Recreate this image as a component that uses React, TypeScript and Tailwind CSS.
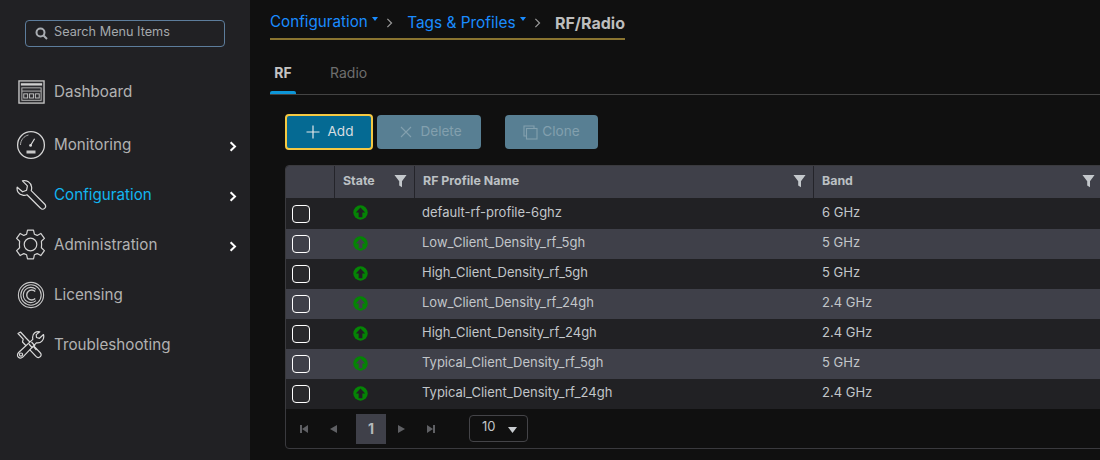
import React from "react";

const font = "font-['Inter','Liberation_Sans',sans-serif]";

const Filter = () => (
  <svg width="13" height="14" viewBox="0 0 14 14" className="shrink-0" preserveAspectRatio="none">
    <path d="M0.5 1H13.5L8.6 7.2V13.2L5.6 11.4V7.2Z" fill="#c4c8cc" />
  </svg>
);

const Up = ({ fill }: { fill: string }) => (
  <svg width="15" height="15" viewBox="0 0 16 16" className="mb-[2px]">
    <circle cx="8" cy="8" r="7.7" fill="#058405" />
    <path d="M8 2.6L13 8H10V13H6V8H3Z" fill={fill} />
  </svg>
);

const Chevron = () => (
  <svg width="8" height="11" viewBox="0 0 8 11" className="ml-auto mr-[13px] shrink-0 mt-[3px]">
    <path d="M1.6 1.2L6 5.5L1.6 9.8" fill="none" stroke="#fff" strokeWidth="2" />
  </svg>
);

const DashboardIcon = () => (
  <svg width="27" height="24" viewBox="0 0 28 26" preserveAspectRatio="none">
    <rect x="1" y="1" width="26" height="24" fill="#2c2c2f" stroke="#c8c8c8" strokeWidth="1.4" />
    <rect x="3" y="3.5" width="22" height="2.5" fill="#d0d0d0" />
    <rect x="4" y="8.5" width="20" height="13.5" fill="none" stroke="#b8b8b8" />
    <path d="M4 12H24" stroke="#b8b8b8" />
    <rect x="6" y="15" width="4" height="4.5" fill="none" stroke="#c4c4c4" />
    <rect x="12" y="15" width="4" height="4.5" fill="none" stroke="#c4c4c4" />
    <rect x="18" y="15" width="4" height="4.5" fill="none" stroke="#c4c4c4" />
  </svg>
);

const MonitoringIcon = () => (
  <svg width="30" height="30" viewBox="0 0 30 30" fill="none">
    <circle cx="15" cy="15" r="13.4" stroke="#d4d4d4" strokeWidth="1.3" />
    <path d="M4.5 15C4.5 10 8 6 12.5 5" stroke="#a8a8a8" />
    <path d="M14.8 15L18.6 8.8" stroke="#d8d8d8" strokeWidth="1.2" />
    <circle cx="14.6" cy="15.4" r="1.4" fill="#d8d8d8" />
    <rect x="10.5" y="20.5" width="9" height="3" fill="#c8c8c8" />
  </svg>
);

const WrenchIcon = () => (
  <svg width="32" height="32" viewBox="0 0 32 32" fill="none">
    <path
      d="M2.2 8.2L7.6 12.8L11.6 11.2L12.4 6.8L7.4 1.8C11.6 0.8 16 3.4 16.6 8C16.8 9.4 16.6 10.6 16.2 11.6L29.6 25C31 26.4 31 27.8 29.8 29.2C28.4 30.6 26.8 30.6 25.6 29.2L12 15.8C10.6 16.4 9.2 16.6 7.8 16.2C3.8 15.4 1.4 12.2 2.2 8.2Z"
      stroke="#dadada"
      strokeWidth="1.2"
      strokeLinejoin="round"
    />
  </svg>
);

const GearIcon = () => (
  <svg width="32" height="32" viewBox="0 0 32 32" fill="none" stroke="#d4d4d4" strokeWidth="1.2">
    <circle cx="15.5" cy="15.5" r="6.3" />
    <path
      d="M12.5 1.2H18.5L19.4 5.2L22.2 6.4L25.8 4.4L29.4 9.4L26.4 12.2L26.6 15.5L26.4 18.8L29.4 21.6L25.8 26.6L22.2 24.6L19.4 25.8L18.5 29.8H12.5L11.6 25.8L8.8 24.6L5.2 26.6L1.6 21.6L4.6 18.8L4.4 15.5L4.6 12.2L1.6 9.4L5.2 4.4L8.8 6.4L11.6 5.2Z"
      strokeLinejoin="round"
    />
  </svg>
);

const LicenseIcon = () => (
  <svg width="28" height="28" viewBox="0 0 28 28" fill="none" stroke="#c8c8c8" strokeWidth="1.1">
    <circle cx="14" cy="14" r="12.6" />
    <circle cx="14" cy="14" r="10.2" />
    <path d="M19 8.4A7.6 7.6 0 1 0 19 19.6" />
    <path d="M18.2 10.4A5 5 0 1 0 18.2 17.6" strokeWidth="1.4" />
  </svg>
);

const ToolsIcon = () => (
  <svg width="30" height="28" viewBox="0 0 30 28" fill="none" stroke="#d8d8d8" strokeWidth="1.2" strokeLinejoin="round">
    <path d="M2 2.5L4.5 1L10 7L24 21.5C25.5 23 25.5 24.5 24.2 25.7C23 27 21.4 26.8 20 25.4L6.5 11L7.2 8.2Z" />
    <path d="M27.5 3.5L23.5 7.3L20.5 6.5L20.2 3.6L23.8 0.8C20 0 16.6 2.4 16.6 6.2L16.8 8.4L2.6 21.5C1 23.2 1.2 25.2 2.4 26.2C3.8 27.4 5.6 27.2 7 25.8L20.4 11.8C25 12.6 28.8 8.6 27.5 3.5Z" fill="#212124" />
    <circle cx="5" cy="23.6" r="1.6" />
    <path d="M13 13L16.5 17M15.5 11L19 15M17.5 15.5L20.5 19" />
  </svg>
);

const items = [
  { label: "Dashboard", icon: <DashboardIcon /> },
  { label: "Monitoring", icon: <MonitoringIcon />, arrow: true },
  { label: "Configuration", icon: <WrenchIcon />, arrow: true, active: true },
  { label: "Administration", icon: <GearIcon />, arrow: true },
  { label: "Licensing", icon: <LicenseIcon /> },
  { label: "Troubleshooting", icon: <ToolsIcon /> },
];

const rows = [
  ["default-rf-profile-6ghz", "6 GHz"],
  ["Low_Client_Density_rf_5gh", "5 GHz"],
  ["High_Client_Density_rf_5gh", "5 GHz"],
  ["Low_Client_Density_rf_24gh", "2.4 GHz"],
  ["High_Client_Density_rf_24gh", "2.4 GHz"],
  ["Typical_Client_Density_rf_5gh", "5 GHz"],
  ["Typical_Client_Density_rf_24gh", "2.4 GHz"],
];

const Caret = () => (
  <span className="inline-block w-0 h-0 ml-[4px] mb-[8px] border-x-[3.5px] border-x-transparent border-t-[4px] border-t-[#1a8cff]" />
);

const Sep = () => (
  <svg width="8" height="12" viewBox="0 0 8 12" className="ml-[8px] mr-[14px] mt-[1px]">
    <path d="M1.5 1.5L6 6L1.5 10.5" fill="none" stroke="#9a9a9a" strokeWidth="1.3" />
  </svg>
);

export default function App() {
  return (
    <div className={`${font} flex w-[1100px] h-[460px] overflow-hidden bg-[#101010]`}>
      <aside className="w-[250px] shrink-0 bg-[#212124] flex flex-col">
        <div className="pt-[20px] pl-[25px]">
          <div className="w-[200px] h-[27px] rounded-[4px] border border-[#5d7d9c] flex items-center pl-[9px] gap-[6px] text-[12.7px] text-[#a4a8ac]">
            <svg width="13" height="13" viewBox="0 0 13 13" fill="none" stroke="#a9adb2" strokeWidth="2">
              <circle cx="5.5" cy="5.5" r="4" />
              <path d="M8.5 8.5L12 12" />
            </svg>
            <span className="leading-none -mt-[3px]">Search Menu Items</span>
          </div>
        </div>
        <nav className="mt-[20px] flex flex-col">
          {items.map((it, i) => (
            <div key={it.label} className={`h-[50px] flex items-center ${i === 0 ? "mb-[3px]" : ""}`}>
              <div className="w-[54px] pl-[14px] flex items-center justify-center pr-[6px] shrink-0">{it.icon}</div>
              <span className={`text-[15.2px] ${it.active ? "text-[#12b5f0]" : "text-[#b2b2b2]"}`}>{it.label}</span>
              {it.arrow && <Chevron />}
            </div>
          ))}
        </nav>
      </aside>

      <main className="flex-1 min-w-0 flex flex-col">
        <div className="pl-[20px] pt-[12px]">
          <div className="w-[355px] h-[28px] border-b-2 border-[#8a7430] flex items-center pb-[5px] text-[15.2px] text-[#1a8cff] whitespace-nowrap">
            <span>Configuration</span>
            <Caret />
            <Sep />
            <span className="text-[15.4px]">Tags &amp; Profiles</span>
            <Caret />
            <Sep />
            <span className="text-[16px] font-bold text-[#bdbdbd]">RF/Radio</span>
          </div>
        </div>
        <div className="ml-[20px] mt-[20px] h-[35px] border-b border-[#444444] flex text-[14px]">
          <div className="w-[26px] relative text-center text-[#c4c4c4] font-bold pt-[2px]">
            RF
            <div className="absolute left-0 right-0 bottom-0 h-[3px] bg-[#0d96d8] rounded-t-[2px]" />
          </div>
          <div className="ml-[34px] pt-[2px] text-[#6e6e6e]">Radio</div>
        </div>

        <div className="pl-[35px] mt-[19px] flex items-center text-[13.6px]">
          <button className="w-[88px] h-[36px] rounded-[4px] border-2 border-[#f5c842] bg-[#056a93] flex items-center justify-center gap-[7px] text-[#d8dde0] leading-none pl-[2px]">
            <svg width="14" height="14" viewBox="0 0 14 14" stroke="#e4e8ea" strokeWidth="1.2"><path d="M7 0.5V13.5M0.5 7H13.5" /></svg>
            Add
          </button>
          <button className="ml-[4px] w-[104px] h-[34px] rounded-[4px] bg-[#587f93] flex items-center justify-center gap-[8px] text-[#83a0ae] leading-none pl-[4px]">
            <svg width="12" height="12" viewBox="0 0 12 12" stroke="#83a0ae" strokeWidth="1.1"><path d="M1 1L11 11M11 1L1 11" /></svg>
            Delete
          </button>
          <button className="ml-[24px] w-[93px] h-[34px] rounded-[4px] bg-[#587f93] flex items-center justify-center gap-[4px] text-[#83a0ae] leading-none">
            <svg width="15" height="15" viewBox="0 0 15 15" fill="none" stroke="#83a0ae" strokeWidth="1.1">
              <path d="M3 11H1V1H11V3" />
              <rect x="3.5" y="3.5" width="10.5" height="10.5" />
            </svg>
            Clone
          </button>
        </div>

        <div className="ml-[35px] mt-[15px] w-[830px] shrink-0 h-[284px] border border-[#3a3a3e] rounded-[4px] overflow-hidden">
          <div className="h-[32px] bg-[#3f4049] flex text-[12.4px] font-bold text-[#bcc0c4] leading-none">
            <div className="w-[49px] border-r border-[#24242a] h-full" />
            <div className="w-[80px] border-r border-[#24242a] h-full flex items-center pl-[8px] pr-[7px] justify-between pb-[2px]">
              State
              <Filter />
            </div>
            <div className="w-[399px] border-r border-[#24242a] h-full flex items-center pl-[8px] pr-[7px] justify-between pb-[2px]">
              RF Profile Name
              <Filter />
            </div>
            <div className="w-[281px] flex items-center pl-[8px] justify-between pb-[2px]">
              Band
              <Filter />
            </div>
          </div>
          {rows.map(([name, band], i) => (
            <div key={name} className={`flex items-center text-[13px] text-[#c2c6ca] ${i === 0 ? "h-[31px]" : "h-[30px]"} ${i % 2 ? "bg-[#3f4049]" : "bg-[#212124]"}`}>
              <div className="w-[49px] pl-[6px] shrink-0">
                <div className={`w-[18px] h-[18px] rounded-[4px] border-[1.5px] border-white ${i % 2 ? "bg-[#3f4049]" : "bg-[#29292c]"}`} />
              </div>
              <div className="w-[80px] pl-[18px] shrink-0 flex">
                <Up fill={i % 2 ? "#3f4049" : "#212124"} />
              </div>
              <div className="w-[399px] pl-[7px] pb-[2px] shrink-0 whitespace-nowrap">{name}</div>
              <div className="pl-[8px] pb-[2px]">{band}</div>
            </div>
          ))}
          <div className="h-[39px] flex items-center">
            <div className="flex items-center pl-[13px]">
              <svg width="10" height="10" viewBox="0 0 10 10" fill="#5f6064"><path d="M1 1H3V9H1ZM9 1V9L3 5Z" /></svg>
              <svg width="10" height="10" viewBox="0 0 10 10" fill="#5f6064" className="ml-[20px]"><path d="M8 1V9L1 5Z" /></svg>
              <div className="ml-[17px] w-[30px] h-[30px] bg-[#3f4049] text-[#b4b8bc] font-bold text-[14px] flex items-center justify-center">1</div>
              <svg width="10" height="10" viewBox="0 0 10 10" fill="#5f6064" className="ml-[10px]"><path d="M2 1V9L9 5Z" /></svg>
              <svg width="10" height="10" viewBox="0 0 10 10" fill="#5f6064" className="ml-[20px]"><path d="M9 1H7V9H9ZM1 1V9L7 5Z" /></svg>
            </div>
            <div className="ml-[33px] mb-[1px] w-[59px] h-[27px] rounded-[4px] border border-[#444448] flex items-center pl-[12px] pb-[1px] text-[13px] text-[#c2c6ca]">
              <span className="-mt-[1px]">10</span>
              <svg width="9" height="6" viewBox="0 0 9 6" fill="#c8ccd0" className="ml-[12px] mt-[4px]"><path d="M0 0H9L4.5 6Z" /></svg>
            </div>
          </div>
        </div>
      </main>
    </div>
  );
}
